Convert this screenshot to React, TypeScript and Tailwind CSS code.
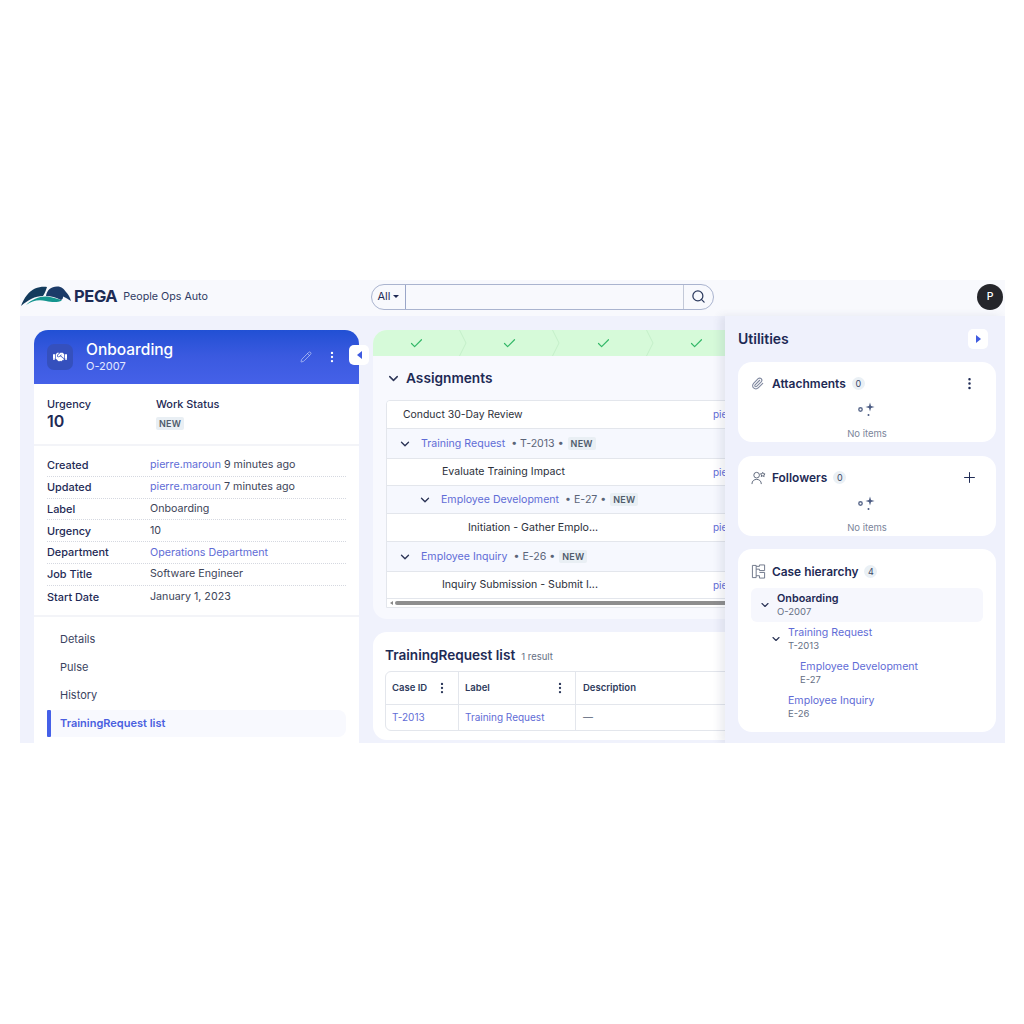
import { ChevronDown, Check, EllipsisVertical, Paperclip, Pencil, Plus, Search } from "lucide-react";
import { FaHandshake } from "react-icons/fa";

const navy = "text-[#1e2a55]";
const link = "text-[#5f6cd6]";

const details = [
  { label: "Created", link: "pierre.maroun", text: " 9 minutes ago" },
  { label: "Updated", link: "pierre.maroun", text: " 7 minutes ago" },
  { label: "Label", text: "Onboarding" },
  { label: "Urgency", text: "10" },
  { label: "Department", link: "Operations Department" },
  { label: "Job Title", text: "Software Engineer" },
  { label: "Start Date", text: "January 1, 2023" },
];

const Logo = () => (
  <svg viewBox="0 0 50 20" className="w-[50px] h-[20px] shrink-0 -mt-[2px]">
    <path d="M0 20C3 12 8 5 14 2.5C18 1 22 0.5 26 1C25 4 24 7 22 10C14 10 7 14 0 20Z" fill="#123a5c" />
    <path d="M5 19C11 13 19 10 26 10.5C32 11 37 13 41 14.5C36 17 30 16 25 15C17 13 11 15 5 19Z" fill="#14958f" />
    <path d="M25 10C26 4 30 0.5 36 0.5C41 0.5 43 3 45 6C47 8 49 11 50 15C47 13.5 45 11.5 42 10.5C42 12 42 13 40 14C35 11.5 30 10 25 10Z" fill="#1b3a68" />
  </svg>
);

const NewBadge = () => (
  <span className="bg-[#e9eff4] text-[#4f5b6b] text-[9px] font-semibold px-[3px] h-[13px] leading-[13px] rounded-[2px] tracking-wide">
    NEW
  </span>
);

const Sparkle = () => (
  <svg viewBox="0 0 20 18" className="w-[20px] h-[18px]">
    <circle cx="3.5" cy="8.5" r="1.7" fill="none" stroke="#5b6a8c" strokeWidth="1.4" />
    <path d="M13 1.5L14 5L17.5 6L14 7L13 10.5L12 7L8.5 6L12 5Z" fill="#4a5a82" />
    <circle cx="11.5" cy="14" r="1" fill="#4a5a82" />
  </svg>
);

const Count = ({ n }: { n: number }) => (
  <span className="w-[13px] h-[13px] rounded-full bg-[#eaf0f5] text-[#3d4a68] text-[9px] flex items-center justify-center">
    {n}
  </span>
);

const FollowersIcon = () => (
  <svg viewBox="0 0 16 16" fill="none" stroke="#5b6478" strokeWidth="1" className="w-[15px] h-[15px]">
    <circle cx="6" cy="5.5" r="3" />
    <path d="M1 15C1 11.5 3.5 10 6 10C8.5 10 11 11.5 11 15" />
    <path d="M12.5 2.5L13.2 4L15 4.2L13.7 5.3L14 7L12.5 6.2L11 7L11.3 5.3L10 4.2L11.8 4Z" />
  </svg>
);

const HierarchyIcon = () => (
  <svg viewBox="0 0 16 16" fill="none" stroke="#6b7386" strokeWidth="1" className="w-[15px] h-[15px]">
    <path d="M1.5 1.5H5.5V14.5H1.5Z" />
    <path d="M5.5 2.5H9V1H14.5V7H9V5.5H5.5" />
    <path d="M9 9H14.5V15H9V12.5H5.5" />
  </svg>
);

const StepChevron = () => (
  <svg viewBox="0 0 8 26" className="w-[8px] h-[26px] shrink-0" fill="none" stroke="#c4efc9" strokeWidth="1">
    <path d="M0.5 0L7 13L0.5 26" />
  </svg>
);

const Step = () => (
  <div className="w-[93.5px] shrink-0 h-full flex items-center">
    <div className="flex-1 flex justify-center pl-[1px]">
      <Check size={15} className="text-[#34b868]" strokeWidth={1.9} />
    </div>
    <StepChevron />
  </div>
);

const AssignRow = ({ text, indent, height }: { text: string; indent: string; height: string }) => (
  <div className={`flex items-center bg-white border-b border-[#e3e6ec] ${height}`}>
    <div className={`w-[326px] shrink-0 text-[10.6px] text-[#2b2f3a] ${indent}`}>{text}</div>
    <span className={`text-[10px] ${link}`}>pierre.maroun</span>
  </div>
);

const GroupRow = ({ name, id, indent, height }: { name: string; id: string; indent: string; height: string }) => (
  <div className={`flex items-center border-b border-[#e3e6ec] bg-[#f6f8fe] ${indent} ${height}`}>
    <ChevronDown size={14} strokeWidth={2.3} className="text-[#2c3557] mr-[9px]" />
    <span className={`text-[10.6px] ${link}`}>{name}</span>
    <span className="text-[10.6px] text-[#5a6478] ml-[6px] mr-[4px]">• {id} •</span>
    <NewBadge />
  </div>
);

const TreeNode = ({ title, id, indent, arrow }: { title: string; id: string; indent: string; arrow?: boolean }) => (
  <div className={`flex items-center h-[34px] ${indent}`}>
    <div className="w-[12px] mr-[6px] shrink-0">{arrow && <ChevronDown size={12} strokeWidth={2.3} className="text-[#2c3557]" />}</div>
    <div className="leading-[13px]">
      <div className={`text-[10.6px] ${link}`}>{title}</div>
      <div className="text-[9.5px] text-[#667085]">{id}</div>
    </div>
  </div>
);

export default function App() {
  return (
    <div className="min-h-[1024px] bg-white pt-[280px] pl-[20px] font-['Inter',sans-serif]">
      <div className="w-[985px] h-[463px] overflow-hidden flex flex-col bg-[#f0f2fc]">
        {/* Top bar */}
        <header className="h-[36px] shrink-0 bg-[#f8f9fd] flex items-center pb-[3px]">
          <div className="w-[351px] flex items-center pl-[1px]">
            <Logo />
            <span className="text-[16.5px] font-bold text-[#1d2b55] ml-[3px] tracking-tight">PEGA</span>
            <span className="text-[10.7px] text-[#2f3b63] ml-[6px] mt-[2px]">People Ops Auto</span>
          </div>
          <div className="w-[343px] h-[26px] rounded-full border border-[#aab4cf] flex items-center bg-[#f8f9fd]">
            <div className={`w-[34px] h-full flex items-center justify-center gap-[3px] text-[11px] ${navy} border-r border-[#9aa6c8]`}>
              All
              <span className="w-0 h-0 border-l-[3px] border-r-[3px] border-t-[3px] border-l-transparent border-r-transparent border-t-[#1e2a55]" />
            </div>
            <div className="flex-1" />
            <div className="w-[30px] h-full flex items-center justify-center border-l border-[#c3c9d8]">
              <Search size={15} className="text-[#2c3a5e]" />
            </div>
          </div>
          <div className="ml-auto mr-[2px] w-[26px] h-[26px] rounded-full bg-[#25262b] text-white text-[10.5px] font-medium flex items-center justify-center">
            P
          </div>
        </header>

        <div className="flex flex-1 min-h-0">
          {/* Case summary */}
          <div className="w-[353px] shrink-0 pl-[14px] pt-[14px] relative">
            <div className="w-[325px] h-full bg-white rounded-t-[14px]">
              <div className="h-[54px] rounded-t-[14px] bg-gradient-to-b from-[#2150d4] via-[#3b5ae0] to-[#4561e8] flex items-center pl-[13px] pr-[20px]">
                <div className="w-[26px] h-[26px] rounded-[7px] bg-[#3550bd] flex items-center justify-center">
                  <FaHandshake size={14} className="text-white" />
                </div>
                <div className="ml-[13px] leading-none -mt-[1px]">
                  <div className="text-[15.5px] font-medium text-white leading-[19px]">Onboarding</div>
                  <div className="text-[11px] text-[#e3e8ff] leading-[14px]">O-2007</div>
                </div>
                <Pencil size={12} strokeWidth={1.3} className="ml-auto text-[#c9d3f7]" />
                <EllipsisVertical size={14} className="ml-[13px] text-white" />
              </div>

              <div className="h-[62px] px-[13px] pt-[13px] flex border-b-2 border-[#f3f4f8]">
                <div className="w-[109px]">
                  <div className={`text-[10.9px] font-medium leading-[14px] ${navy}`}>Urgency</div>
                  <div className={`text-[16px] font-semibold leading-[20px] ${navy}`}>10</div>
                </div>
                <div>
                  <div className={`text-[10.9px] font-medium leading-[14px] ${navy}`}>Work Status</div>
                  <div className="mt-[6px] flex">
                    <NewBadge />
                  </div>
                </div>
              </div>

              <div className="px-[13px] pt-[9px] pb-[7px] border-b-2 border-[#f3f4f8]">
                {details.map((row, i) => (
                  <div
                    key={row.label}
                    className={`flex items-center h-[21.8px] text-[10.7px] ${i < details.length - 1 ? "border-b border-dotted border-[#d5d8e0]" : ""}`}
                  >
                    <span className={`w-[103px] text-[10.9px] font-medium ${navy}`}>{row.label}</span>
                    <span className="text-[#3d4458] whitespace-pre">
                      {row.link && <span className={link}>{row.link}</span>}
                      {row.text}
                    </span>
                  </div>
                ))}
              </div>

              <nav className="px-[13px] pt-[9px]">
                {["Details", "Pulse", "History"].map((item) => (
                  <div key={item} className="h-[27.7px] pl-[13px] flex items-center text-[11px] text-[#3a4360]">
                    {item}
                  </div>
                ))}
                <div className="h-[27px] mt-[1px] flex items-center rounded-[8px] bg-[#f8f9fe]">
                  <div className="w-[4px] h-full bg-[#4560e8] rounded-[1px]" />
                  <span className="ml-[9px] text-[11px] font-semibold text-[#4a5fe0]">TrainingRequest list</span>
                </div>
              </nav>
            </div>
            <button className="absolute left-[329px] top-[29px] w-[20px] h-[20px] bg-white rounded-[5px] flex items-center justify-center">
              <span className="w-0 h-0 border-y-[4px] border-r-[5px] border-y-transparent border-r-[#3f5be0]" />
            </button>
          </div>

          {/* Workflow */}
          <div className="w-[352px] shrink-0 overflow-hidden pt-[14px]">
            <div className="w-[420px] h-[289px] bg-[#f8f9fe] rounded-[14px] overflow-hidden">
              <div className="h-[26px] bg-[#d6fad9] flex">
                <Step />
                <Step />
                <Step />
                <Step />
              </div>
              <div className="flex items-center h-[44px] pl-[13px] pt-[1px]">
                <ChevronDown size={15} strokeWidth={2.3} className="text-[#2c3557]" />
                <span className={`ml-[5px] text-[13.7px] font-semibold ${navy}`}>Assignments</span>
              </div>
              <div className="ml-[13px] border border-[#e3e6ec] rounded-t-[4px] overflow-hidden">
                <div className="flex items-center h-[28px] bg-white border-b border-[#e3e6ec]">
                  <div className="w-[326px] shrink-0 pl-[16px] text-[10.4px] text-[#2b2f3a]">Conduct 30-Day Review</div>
                  <span className={`text-[10px] ${link}`}>pierre.maroun</span>
                </div>
                <GroupRow name="Training Request" id="T-2013" indent="pl-[11px]" height="h-[30px]" />
                <AssignRow text="Evaluate Training Impact" indent="pl-[55px]" height="h-[27px]" />
                <GroupRow name="Employee Development" id="E-27" indent="pl-[31px]" height="h-[28px]" />
                <AssignRow text="Initiation - Gather Emplo..." indent="pl-[81px]" height="h-[28px]" />
                <GroupRow name="Employee Inquiry" id="E-26" indent="pl-[11px]" height="h-[30px]" />
                <AssignRow text="Inquiry Submission - Submit I..." indent="pl-[55px]" height="h-[27px]" />
                <div className="h-[8px] bg-white flex items-center pl-[3px] gap-[2px]">
                  <span className="w-0 h-0 border-y-[2px] border-r-[3px] border-y-transparent border-r-[#888]" />
                  <div className="h-[4px] flex-1 bg-[#8e8e8e] rounded-full" />
                </div>
              </div>
            </div>

            <div className="w-[420px] h-[108px] bg-white rounded-[14px] mt-[13px] px-[12px] pt-[13px]">
              <div className="flex items-baseline h-[26px]">
                <span className={`text-[13.6px] font-semibold ${navy}`}>TrainingRequest list</span>
                <span className="ml-[6px] text-[9.5px] text-[#667085]">1 result</span>
              </div>
              <div className="border border-[#e3e6ec] rounded-[6px]">
                <div className="flex h-[33px] border-b border-[#e3e6ec] text-[9.5px] font-semibold text-[#2e3a5c]">
                  <div className="w-[73px] pl-[6px] pr-[9px] flex items-center justify-between border-r border-[#e3e6ec]">
                    Case ID
                    <EllipsisVertical size={14} />
                  </div>
                  <div className="w-[117px] pl-[6px] pr-[8px] flex items-center justify-between border-r border-[#e3e6ec]">
                    Label
                    <EllipsisVertical size={14} />
                  </div>
                  <div className="flex-1 pl-[7px] flex items-center">Description</div>
                </div>
                <div className="flex h-[25px] text-[10px]">
                  <div className={`w-[73px] pl-[6px] flex items-center border-r border-[#e3e6ec] ${link}`}>T-2013</div>
                  <div className={`w-[117px] pl-[6px] flex items-center border-r border-[#e3e6ec] ${link}`}>Training Request</div>
                  <div className="flex-1 pl-[7px] flex items-center text-[#555e75]">—</div>
                </div>
              </div>
            </div>
          </div>

          {/* Utilities */}
          <aside className="w-[280px] shrink-0 bg-[#eff1fc] shadow-[-5px_0_8px_rgba(60,70,110,0.1)] pl-[13px] pr-[9px] z-10">
            <div className="h-[45px] mb-[1px] flex items-center justify-between pr-[8px]">
              <span className={`text-[14px] font-semibold ${navy}`}>Utilities</span>
              <button className="w-[20px] h-[20px] bg-white rounded-[5px] flex items-center justify-center">
                <span className="w-0 h-0 border-y-[4px] border-l-[5px] border-y-transparent border-l-[#3f5be0]" />
              </button>
            </div>

            <section className="h-[80px] bg-white rounded-[14px] pl-[13px] pr-[19px] pt-[13px] mb-[14px]">
              <div className="flex items-center h-[17px]">
                <Paperclip size={13} className="text-[#8089a0]" />
                <span className={`ml-[8px] text-[12px] font-semibold ${navy}`}>Attachments</span>
                <span className="ml-[6px]"><Count n={0} /></span>
                <EllipsisVertical size={15} className={`ml-auto ${navy}`} />
              </div>
              <div className="flex flex-col items-center mt-[9px] pl-[6px]">
                <Sparkle />
                <span className="text-[9.5px] text-[#7b859b] leading-[14px] mt-[8px]">No items</span>
              </div>
            </section>

            <section className="h-[80px] bg-white rounded-[14px] pl-[13px] pr-[18px] pt-[13px] mb-[13px]">
              <div className="flex items-center h-[17px]">
                <FollowersIcon />
                <span className={`ml-[6px] text-[11.9px] font-semibold ${navy}`}>Followers</span>
                <span className="ml-[6px]"><Count n={0} /></span>
                <Plus size={17} strokeWidth={1.4} className={`ml-auto ${navy}`} />
              </div>
              <div className="flex flex-col items-center mt-[9px] pl-[5px]">
                <Sparkle />
                <span className="text-[9.5px] text-[#7b859b] leading-[14px] mt-[8px]">No items</span>
              </div>
            </section>

            <section className="h-[183px] bg-white rounded-[14px] px-[13px] pt-[14px]">
              <div className="flex items-center h-[17px]">
                <HierarchyIcon />
                <span className={`ml-[6px] text-[11.9px] font-semibold ${navy}`}>Case hierarchy</span>
                <span className="ml-[6px]"><Count n={4} /></span>
              </div>
              <div className="mt-[8px] h-[34px] w-[232px] bg-[#f6f7fd] rounded-[6px] flex items-center pl-[8px]">
                <ChevronDown size={12} strokeWidth={2.3} className="text-[#2c3557] mr-[6px]" />
                <div className="leading-[13px]">
                  <div className={`text-[10.8px] font-semibold ${navy}`}>Onboarding</div>
                  <div className="text-[9.5px] text-[#667085]">O-2007</div>
                </div>
              </div>
              <TreeNode title="Training Request" id="T-2013" indent="pl-[19px]" arrow />
              <TreeNode title="Employee Development" id="E-27" indent="pl-[31px]" />
              <TreeNode title="Employee Inquiry" id="E-26" indent="pl-[19px]" />
            </section>
          </aside>
        </div>
      </div>
    </div>
  );
}
